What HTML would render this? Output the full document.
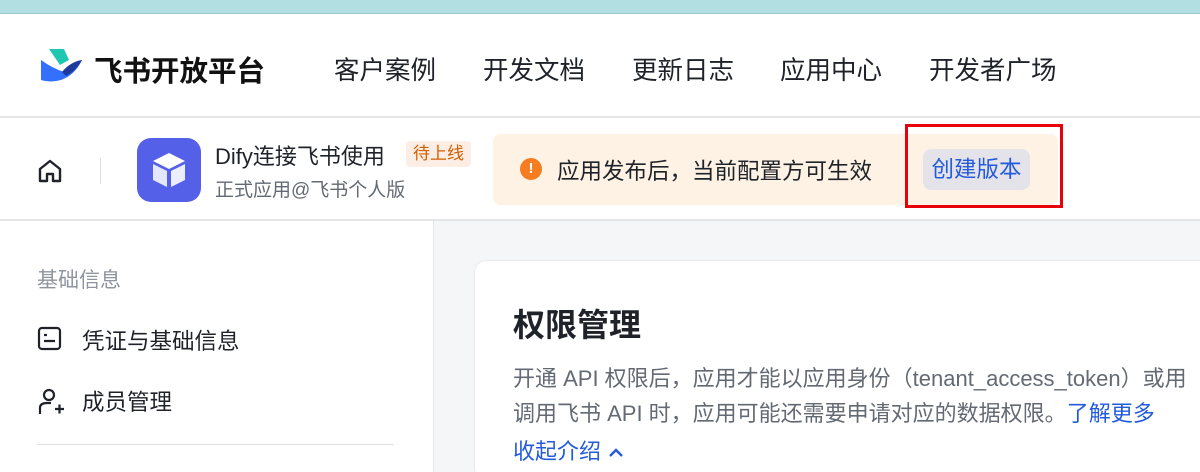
<!DOCTYPE html>
<html><head><meta charset="utf-8"><style>
*{margin:0;padding:0;box-sizing:border-box}
html,body{width:1200px;height:472px;overflow:hidden}
body{background:#fff;font-family:"Liberation Sans","Noto Sans CJK SC",sans-serif;color:#1f2329;position:relative}
.abs{position:absolute;white-space:nowrap}
</style></head><body>
<div class="abs" style="left:0;top:0;width:1200px;height:14px;background:#b2dfe1;border-bottom:1px solid #9cc7c9"></div>
<div class="abs" style="left:0;top:116px;width:1200px;height:2px;background:#e4e5e7"></div>
<svg class="abs" style="left:40px;top:48px" width="44" height="36" viewBox="0 0 44 36">
<path d="M9 1 H24 L29 12 L20 17 Z" fill="#1fc7b0"/>
<path d="M1 12 Q12 20 24 24 Q30 14 42 12 Q35 27 21 32 Q10 35 1 32 Z" fill="#3370ff"/>
<path d="M22 24 Q30 14 42 12 Q36 23 26 28 Z" fill="#1e3a9c"/>
</svg>
<div class="abs" style="left:94px;top:49px;font-size:28.5px;font-weight:700;color:#111">飞书开放平台</div>
<div class="abs" style="left:334px;top:50px;font-size:25.5px">客户案例</div>
<div class="abs" style="left:483px;top:50px;font-size:25.5px">开发文档</div>
<div class="abs" style="left:632px;top:50px;font-size:25.5px">更新日志</div>
<div class="abs" style="left:780px;top:50px;font-size:25.5px">应用中心</div>
<div class="abs" style="left:929px;top:50px;font-size:25.5px">开发者广场</div>

<svg class="abs" style="left:36px;top:157px" width="28" height="28" viewBox="0 0 28 28"><path d="M4 12 L14 4 L24 12 V24 H17 V17 H11 V24 H4 Z" fill="none" stroke="#1f2329" stroke-width="2.4" stroke-linejoin="round"/></svg>
<div class="abs" style="left:100px;top:158px;width:1px;height:26px;background:#dee0e3"></div>
<div class="abs" style="left:137px;top:138px;width:64px;height:64px;border-radius:14px;background:#5460e8"></div>
<svg class="abs" style="left:148px;top:149px" width="42" height="42" viewBox="0 0 42 42"><path d="M21 4 L37 12 L21 20 L5 12 Z" fill="#fff"/><path d="M5 15 L19 22 V38 L5 31 Z" fill="#e4e6fb"/><path d="M37 15 L23 22 V38 L37 31 Z" fill="#eceefc"/></svg>
<div class="abs" style="left:215px;top:139px;font-size:22px">Dify连接飞书使用</div>
<div class="abs" style="left:406px;top:141px;padding:0 7px;height:26px;line-height:26px;background:#fdeee5;border-radius:4px;color:#d25f00;font-size:17px">待上线</div>
<div class="abs" style="left:215px;top:175px;font-size:19px;color:#646a73">正式应用@飞书个人版</div>
<div class="abs" style="left:493px;top:134px;width:565px;height:71px;background:#fef2e5;border-radius:8px"></div>
<div class="abs" style="left:520px;top:158px;width:22px;height:22px;border-radius:50%;background:#f57c20;color:#fff;font-size:15px;font-weight:700;text-align:center;line-height:22px">!</div>
<div class="abs" style="left:557px;top:154px;font-size:22.5px">应用发布后，当前配置方可生效</div>
<div class="abs" style="left:923px;top:149px;width:107px;height:41px;background:#e5e3ea;border-radius:8px;color:#245bdb;font-size:22.5px;line-height:41px;text-align:center">创建版本</div>
<div class="abs" style="left:905px;top:124px;width:158px;height:84px;border:3px solid #e8000b"></div>
<div class="abs" style="left:0;top:219px;width:1200px;height:2px;background:#e4e5e7"></div>

<div class="abs" style="left:433px;top:221px;width:767px;height:251px;background:#f5f6f7;border-left:1px solid #e4e5e7"></div>
<div class="abs" style="left:474px;top:260px;width:740px;height:220px;background:#fff;border:1px solid #e8e9eb;border-radius:12px"></div>
<div class="abs" style="left:37px;top:264px;font-size:21px;color:#8f959e">基础信息</div>
<svg class="abs" style="left:37px;top:326px" width="26" height="26" viewBox="0 0 26 26"><rect x="2" y="2" width="21" height="21" rx="3" fill="none" stroke="#1f2329" stroke-width="2.2"/><path d="M7 9 H10 M7 15 H18" stroke="#1f2329" stroke-width="2.2"/></svg>
<div class="abs" style="left:82px;top:324px;font-size:22.5px">凭证与基础信息</div>
<svg class="abs" style="left:37px;top:388px" width="28" height="28" viewBox="0 0 28 28"><circle cx="12" cy="7" r="5" fill="none" stroke="#1f2329" stroke-width="2.2"/><path d="M3 26 V20 Q3 15 10 15 H14" fill="none" stroke="#1f2329" stroke-width="2.2"/><path d="M18 21 H27 M22.5 16.5 V25.5" stroke="#1f2329" stroke-width="2.2"/></svg>
<div class="abs" style="left:82px;top:385px;font-size:22.5px">成员管理</div>
<div class="abs" style="left:37px;top:444px;width:357px;height:1px;background:#dee0e3"></div>

<div class="abs" style="left:513px;top:300px;font-size:32px;font-weight:700">权限管理</div>
<div class="abs" style="left:513px;top:361px;font-size:22px;color:#646a73">开通 API 权限后，应用才能以应用身份（tenant_access_token）或用</div>
<div class="abs" style="left:513px;top:396px;font-size:22px;color:#646a73">调用飞书 API 时，应用可能还需要申请对应的数据权限。<span style="color:#245bdb">了解更多</span></div>
<div class="abs" style="left:513px;top:434px;font-size:22px;color:#245bdb">收起介绍 <svg width="18" height="12" viewBox="0 0 18 12" style="vertical-align:middle"><path d="M3 9 L9 3 L15 9" fill="none" stroke="#245bdb" stroke-width="2.4"/></svg></div>
</body></html>
